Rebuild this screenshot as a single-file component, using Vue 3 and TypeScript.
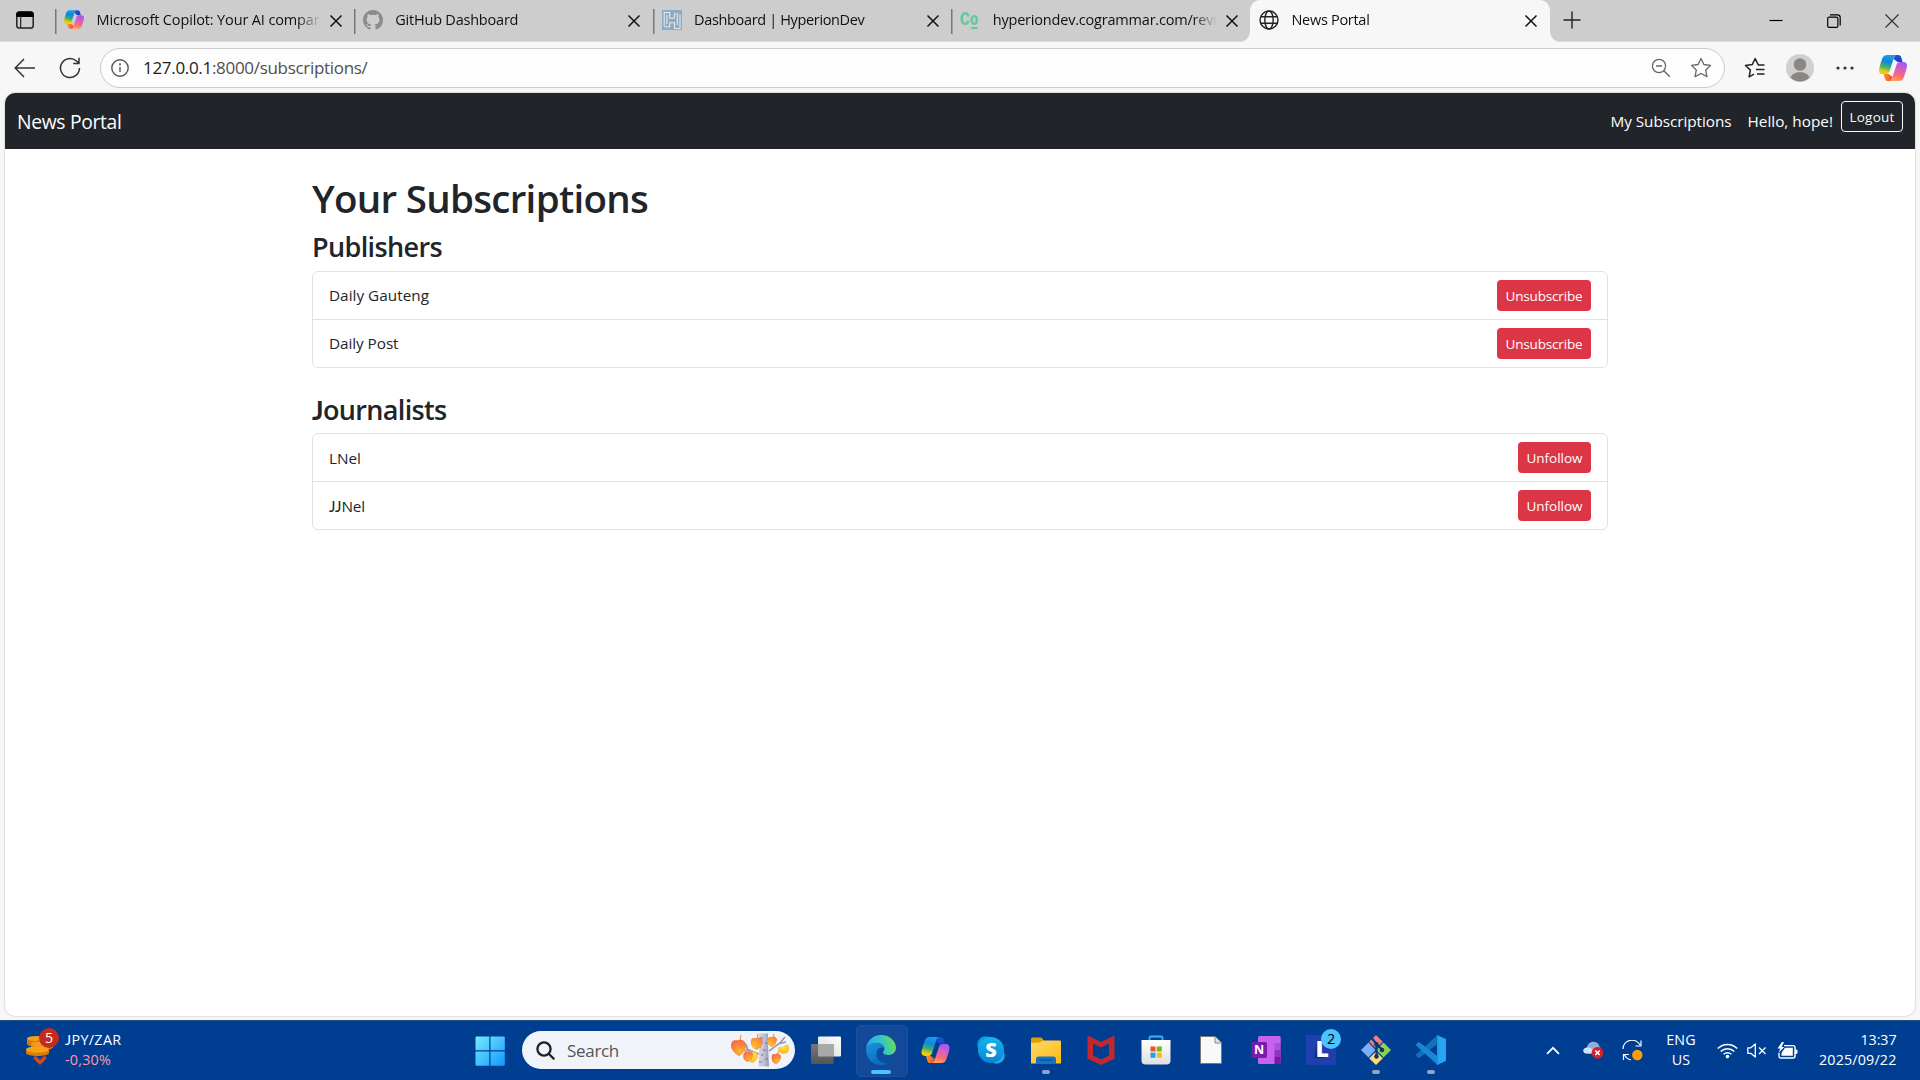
<script setup lang="ts">
import type { Directive } from 'vue'

interface Tab {
  title: string
  width: number
  icon: string
}

interface Row {
  name: string
  width: number
}

interface Section {
  title: string
  width: number
  action: string
  actionWidth: number
  rows: Row[]
}

// Tracks a label so that it occupies the given advance width.
const vFit: Directive<HTMLElement, number> = {
  mounted(el, binding) {
    const count = (el.textContent ?? '').length
    const natural = el.getBoundingClientRect().width
    if (count > 0) {
      el.style.letterSpacing = `${(binding.value - natural) / count}px`
    }
  },
}

// Leading J's are set in a face whose J rests on the baseline.
const leadJ = (text: string): string => /^J*/.exec(text)?.[0] ?? ''
const afterJ = (text: string): string => text.slice(leadJ(text).length)

const tabs: Tab[] = [
  { title: 'Microsoft Copilot: Your AI compan', width: 226, icon: 'copilot' },
  { title: 'GitHub Dashboard', width: 123, icon: 'github' },
  { title: 'Dashboard | HyperionDev', width: 170.5, icon: 'hyperion' },
  { title: 'hyperiondev.cogrammar.com/revi', width: 224, icon: 'co' },
]

const sections: Section[] = [
  {
    title: 'Publishers',
    width: 130,
    action: 'Unsubscribe',
    actionWidth: 77,
    rows: [
      { name: 'Daily Gauteng', width: 100 },
      { name: 'Daily Post', width: 69.5 },
    ],
  },
  {
    title: 'Journalists',
    width: 134.5,
    action: 'Unfollow',
    actionWidth: 56,
    rows: [
      { name: 'LNel', width: 32 },
      { name: 'JJNel', width: 36 },
    ],
  },
]
</script>

<template>
  <div class="screen">
    <svg class="defs" width="0" height="0" aria-hidden="true">
      <defs>
        <linearGradient id="cpL" x1="0.55" y1="0" x2="0.3" y2="1">
          <stop offset="0" stop-color="#1b9cf0" />
          <stop offset="0.35" stop-color="#1286d8" />
          <stop offset="0.62" stop-color="#3fae6b" />
          <stop offset="0.88" stop-color="#e6cf1c" />
          <stop offset="1" stop-color="#ffc400" />
        </linearGradient>
        <linearGradient id="cpR" x1="0.65" y1="0" x2="0.4" y2="1">
          <stop offset="0" stop-color="#a259f0" />
          <stop offset="0.4" stop-color="#d95fc0" />
          <stop offset="0.7" stop-color="#fb6a6f" />
          <stop offset="1" stop-color="#ffa35a" />
        </linearGradient>
        <linearGradient id="cpT" x1="0" y1="0" x2="1" y2="1">
          <stop offset="0" stop-color="#1a55d8" />
          <stop offset="1" stop-color="#1f3fc4" />
        </linearGradient>
        <linearGradient id="cpB" x1="0" y1="0" x2="1" y2="0">
          <stop offset="0" stop-color="#ff9a2e" />
          <stop offset="1" stop-color="#f0452c" />
        </linearGradient>
        <symbol id="copilot" viewBox="0 0 28 26">
          <path d="M16 0h3c2 0 2.800 1 3.300 2.600L23.600 7h-5l-4-3z" fill="url(#cpT)" />
          <path d="M12 26H9c-2 0-2.700-1-3.200-2.600L4.500 19h5l4 3z" fill="url(#cpB)" />
          <path d="M8.500 0H18c-1.600 0-2.600 1.200-3.100 2.800L10.600 16c-.7 2-1.800 3-3.800 3H3.500C.6 19-.5 16.800.2 13.800.9 10.400 2.300 6 3.400 3.200 4.300 1 5.800 0 8.500 0z" fill="url(#cpL)" />
          <path d="M19.500 26H10c1.600 0 2.600-1.200 3.100-2.800L17.400 10c.7-2 1.800-3 3.800-3h3.300c2.900 0 4 2.200 3.300 5.200-.7 3.400-2.100 7.800-3.200 10.600-.9 2.200-2.400 3.200-5.100 3.200z" fill="url(#cpR)" />
        </symbol>
        <symbol id="x" viewBox="0 0 14 14">
          <path d="M1.500 1.500l11 11M12.500 1.500l-11 11" fill="none" stroke="#111" stroke-width="1.500" />
        </symbol>
      </defs>
    </svg>

    <header class="tabstrip">
      <div class="actions">
        <svg width="18" height="18" viewBox="0 0 18 18">
          <rect x="0.800" y="1" width="16.400" height="16" rx="2.600" fill="none" stroke="#222" stroke-width="1.500" />
          <path d="M.8 5.500V3.200Q.8 1 3 1h12q2.200 0 2.200 2.200v2.300z" fill="#000" stroke="#000" />
          <path d="M4.700 5v12" stroke="#222" stroke-width="1.200" />
        </svg>
      </div>
      <div v-for="tab in tabs" :key="tab.title" class="tab">
        <svg v-if="tab.icon === 'copilot'" class="fav" width="20" height="19"><use href="#copilot" /></svg>
        <svg v-else-if="tab.icon === 'github'" class="fav" width="20" height="20" viewBox="0 0 16 16">
          <path fill="#8b8b8b" d="M8 0C3.580 0 0 3.580 0 8c0 3.540 2.290 6.530 5.470 7.590.4.070.55-.17.55-.38 0-.19-.01-.82-.01-1.490-2.010.37-2.530-.49-2.690-.94-.09-.23-.48-.94-.82-1.130-.28-.15-.68-.52-.01-.53.63-.01 1.080.58 1.230.82.72 1.210 1.870.87 2.330.66.070-.52.28-.87.51-1.070-1.780-.2-3.640-.89-3.640-3.950 0-.87.31-1.590.82-2.150-.08-.2-.36-1.020.08-2.120 0 0 .67-.21 2.200.82.64-.18 1.320-.27 2-.27s1.360.09 2 .27c1.530-1.040 2.200-.82 2.200-.82.44 1.100.16 1.920.08 2.120.51.56.82 1.270.82 2.150 0 3.070-1.870 3.750-3.650 3.950.29.25.54.73.54 1.480 0 1.070-.01 1.930-.01 2.200 0 .21.15.46.55.38A8.010 8.010 0 0 0 16 8c0-4.420-3.580-8-8-8z" />
        </svg>
        <svg v-else-if="tab.icon === 'hyperion'" class="fav" width="20" height="20" viewBox="0 0 20 20">
          <rect width="20" height="20" fill="#8eabc2" />
          <path d="M2.200 16V2.500h5.500v5.700h4.600V4h1.800M18 4.500V18.500h-5.500v-5.800H7.700v4H2.200M4.900 5v9M15.300 3v12" fill="none" stroke="#e2e9ee" stroke-width="1.100" />
        </svg>
        <span v-else class="fav co">Co<i></i></span>
        <div class="title"><span v-fit="tab.width">{{ tab.title }}</span></div>
        <svg class="close" width="14" height="14"><use href="#x" /></svg>
      </div>
      <div class="tab active">
        <svg class="fav" width="20" height="20" viewBox="0 0 20 20" fill="none" stroke="#222" stroke-width="1.400">
          <circle cx="10" cy="10" r="9" />
          <ellipse cx="10" cy="10" rx="4.200" ry="9" />
          <path d="M1.800 6.800h16.400M1.800 13.200h16.400" />
        </svg>
        <div class="title"><span v-fit="78">News Portal</span></div>
        <svg class="close" width="14" height="14"><use href="#x" /></svg>
      </div>
      <svg class="plus" width="18" height="18" viewBox="0 0 18 18"><path d="M9 0.500v17M.5 9h17" stroke="#222" stroke-width="1.400" /></svg>
      <div class="winctl">
        <svg width="14" height="14" viewBox="0 0 14 14"><path d="M.5 6.500h13" stroke="#000" stroke-width="1.200" /></svg>
        <svg width="14" height="14" viewBox="0 0 14 14" fill="none" stroke="#000" stroke-width="1.200">
          <rect x="0.700" y="3.200" width="10.200" height="10.200" rx="1.500" />
          <path d="M3 .8h7.500q2.700 0 2.700 2.700v8" />
        </svg>
        <svg width="14" height="14" viewBox="0 0 14 14"><path d="M.5.5l13 13M13.500.5l-13 13" stroke="#333" stroke-width="1.200" /></svg>
      </div>
    </header>

    <div class="toolbar">
      <svg class="back" width="22" height="20" viewBox="0 0 22 20" fill="none" stroke="#333" stroke-width="1.500">
        <path d="M21 10H1.500M10 1L1.200 10l8.800 9" />
      </svg>
      <svg class="reload" width="22" height="22" viewBox="0 0 22 22" fill="none" stroke="#333" stroke-width="1.500">
        <path d="M20.500 11a9.500 9.500 0 1 1-3.300-7.200L20 6.300M20 .8v5.700h-5.800" />
      </svg>
      <div class="address">
        <svg class="info" width="18" height="18" viewBox="0 0 18 18" fill="none" stroke="#555" stroke-width="1.400">
          <circle cx="9" cy="9" r="8.200" />
          <path d="M9 8v5" />
          <circle cx="9" cy="5.400" r="0.400" />
        </svg>
        <span v-fit="224.5" class="url">127.0.0.1<em>:8000/subscriptions/</em></span>
        <svg class="zoom" width="20" height="20" viewBox="0 0 20 20" fill="none" stroke="#666" stroke-width="1.300">
          <circle cx="8" cy="8" r="6.600" />
          <path d="M5 8h6M12.800 12.800l6 6" />
        </svg>
        <svg class="star" width="22" height="22" viewBox="0 0 22 22" fill="none" stroke="#666" stroke-width="1.300" stroke-linejoin="round">
          <path d="M11 1.500l2.900 6 6.600.9-4.800 4.600 1.200 6.600-5.900-3.100-5.900 3.100 1.200-6.600L1.500 8.400l6.600-.9z" />
        </svg>
      </div>
      <svg class="favs" width="22" height="22" viewBox="0 0 22 22" fill="none" stroke="#222" stroke-width="1.500" stroke-linejoin="round">
        <path d="M20.500 8h-6.200L11.200 1.500 8.200 7.600l-6.700.9 4.900 4.600-1.300 6.800 5-2.700M12 12.500h8.500M13 17h7.500" />
      </svg>
      <svg class="avatar" width="28" height="28" viewBox="0 0 28 28">
        <clipPath id="av"><circle cx="14" cy="14" r="13.500" /></clipPath>
        <circle cx="14" cy="14" r="14" fill="#d2d0ce" />
        <circle cx="14" cy="10.500" r="6.300" fill="#8a8886" />
        <ellipse cx="14" cy="26" rx="10" ry="8" fill="#8a8886" clip-path="url(#av)" />
      </svg>
      <svg class="dots" width="18" height="4" viewBox="0 0 18 4" fill="#333">
        <circle cx="2" cy="2" r="1.600" /><circle cx="9" cy="2" r="1.600" /><circle cx="16" cy="2" r="1.600" />
      </svg>
      <svg class="pilot" width="28" height="26"><use href="#copilot" /></svg>
    </div>

    <main class="page">
      <nav class="navbar">
        <span v-fit="104.5" class="brand">News Portal</span>
        <div class="navlinks">
          <a class="nl"><span v-fit="121">My Subscriptions</span></a>
          <a class="nl"><span v-fit="85.5">Hello, hope!</span></a>
          <button class="logout"><span v-fit="45">Logout</span></button>
        </div>
      </nav>
      <div class="container">
        <h1><span v-fit="336">Your Subscriptions</span></h1>
        <section v-for="s in sections" :key="s.title">
          <h3><span v-fit="s.width"><i class="j">{{ leadJ(s.title) }}</i>{{ afterJ(s.title) }}</span></h3>
          <ul>
            <li v-for="r in s.rows" :key="r.name">
              <span v-fit="r.width"><i class="j">{{ leadJ(r.name) }}</i>{{ afterJ(r.name) }}</span>
              <button class="danger"><span v-fit="s.actionWidth">{{ s.action }}</span></button>
            </li>
          </ul>
        </section>
      </div>
    </main>

    <footer class="taskbar">
      <div class="widget">
        <div class="coins">
          <svg width="28" height="30" viewBox="0 0 28 30">
            <path d="M1 4v5c0 1.500 4 2.500 9 2.500V3z" fill="#d97a0a" />
            <ellipse cx="10" cy="3.500" rx="9" ry="2.500" fill="#f5a019" />
            <path d="M5 9v4c2 2 6 2.500 12 2 5-.3 10-1 10-3V8z" fill="#e8850c" />
            <ellipse cx="15" cy="9" rx="10" ry="3" fill="#f39a16" />
            <path d="M0 14.500V18c0 4 23 4 23 0v-3.500z" fill="#d97a0a" />
            <ellipse cx="11.500" cy="14.500" rx="11.500" ry="3.200" fill="#f5a019" />
            <path d="M9.500 23l4.500 4.500 4.500-4.500" fill="none" stroke="#d8481b" stroke-width="3.600" stroke-linecap="round" />
          </svg>
          <b class="bdg">5</b>
        </div>
        <div class="quote">
          <span v-fit="56.5"><i class="j">J</i>PY/ZAR</span>
          <span v-fit="46" class="neg">-0,30%</span>
        </div>
      </div>

      <div class="center">
        <svg class="start" width="30" height="30" viewBox="0 0 30 30">
          <linearGradient id="win" x1="0" y1="0" x2="1" y2="1" gradientUnits="objectBoundingBox">
            <stop offset="0" stop-color="#74ecff" /><stop offset="1" stop-color="#1298fb" />
          </linearGradient>
          <path d="M1.500 0.500H14.300V14.300H.5V1.500q0-1 1-1zM15.500.5h13.300q1 0 1 1V14.300H15.500zM.5 15.500H14.300v14.300H1.500q-1 0-1-1zM15.500 15.500h14.300v13.300q0 1-1 1H15.500z" fill="url(#win)" />
        </svg>
        <div class="search">
          <svg class="mag" width="19" height="19" viewBox="0 0 19 19" fill="none" stroke="#222" stroke-width="2.300" stroke-linecap="round">
            <circle cx="8" cy="8" r="6.600" /><path d="M13 13l4.600 4.600" />
          </svg>
          <span v-fit="52">Search</span>
          <svg class="tree" width="60" height="34" viewBox="0 0 60 34">
            <defs>
              <radialGradient id="lf" cx="0.300" cy="0.700" r="0.800"><stop offset="0" stop-color="#ffc52e" /><stop offset="1" stop-color="#fb7b3a" /></radialGradient>
              <radialGradient id="lg" cx="0.600" cy="0.700" r="0.700"><stop offset="0" stop-color="#ffb62a" /><stop offset="1" stop-color="#fa6a48" /></radialGradient>
              <radialGradient id="ly" cx="0.500" cy="0.300" r="0.800"><stop offset="0" stop-color="#ffe04a" /><stop offset="1" stop-color="#f9b21c" /></radialGradient>
              <linearGradient id="tr"><stop offset="0" stop-color="#d7d7e6" /><stop offset="0.600" stop-color="#bcbcd2" /><stop offset="1" stop-color="#9696b2" /></linearGradient>
            </defs>
            <path d="M16 16l13 5M39 18l11-8 5-6M48 11l8-2M18 17l-2-6M14 18l5 0" fill="none" stroke="#9a9ab0" stroke-width="1.600" />
            <path d="M28.500 0.500h9.500v12l1 21H28.200l1-15z" fill="url(#tr)" />
            <path d="M30 5h3M35 10h3M29 14h2M33 17h3M31 22h2M35 26h3M29 29h3" stroke="#77778f" stroke-width="1.100" />
            <path d="M48 15c2-2 3 0 4-1 2-1 4-3 6-2 2 3 1 6-1 8-4 2-9 0-9-5z" fill="url(#ly)" />
            <path d="M21 20c3-2 6-1 7 2 0 4-3 7-6 8-4-2-4-7-1-10z" fill="url(#ly)" />
            <path d="M2 9c2-3 5-1 7-2 3-1 6 1 7 4 1 5-3 10-7 12C3 20-1 14 2 9z" fill="url(#lg)" />
            <path d="M21.500 6c2-2 4 0 5-1 3-1 5 0 6 2 1 4-2 8-6 10-5-2-7-7-5-11z" fill="url(#lf)" />
            <path d="M38 5c2-2 3 0 4-1 2-1 4 0 5 2 0 4-2 6-5 8-4-1-6-5-4-9z" fill="url(#lf)" />
            <path d="M14 20c2-2 3 0 4-1 2-1 4 0 5 2 0 4-2 7-5 8-4-1-6-5-4-9z" fill="url(#lg)" />
            <path d="M42 22c2-2 3 0 4-1 2-1 4 0 5 2 0 4-2 7-5 8-4-1-5-5-4-9z" fill="url(#lg)" />
            <path d="M10 7l1-5M27 5l1-4M43 4l1-3M18 19l2-3M47 21l2-3" stroke="#f08b2c" stroke-width="1" />
          </svg>
        </div>

        <div class="app">
          <svg width="30" height="28" viewBox="0 0 30 28">
            <linearGradient id="tv1" x1="0" y1="0" x2="0" y2="1"><stop offset="0" stop-color="#777" /><stop offset="1" stop-color="#555" /></linearGradient>
            <linearGradient id="tv2" x1="1" y1="0" x2="0" y2="1"><stop offset="0" stop-color="#fff" /><stop offset="1" stop-color="#d8d8d8" /></linearGradient>
            <rect x="7" y="0.500" width="23" height="20" rx="1" fill="url(#tv2)" />
            <rect x="0" y="8" width="22.500" height="20" rx="1" fill="url(#tv1)" />
            <path d="M7 8h15.500v12.500H8q-1 0-1-1z" fill="#a9a9a9" />
          </svg>
        </div>
        <div class="app on">
          <svg width="30" height="30" viewBox="0 0 30 30">
            <defs>
              <linearGradient id="e1" x1="0" y1="0.500" x2="1" y2="0.300"><stop offset="0" stop-color="#26a5e6" /><stop offset="0.500" stop-color="#2fc3cf" /><stop offset="1" stop-color="#6ae04e" /></linearGradient>
              <linearGradient id="e2" x1="0" y1="0" x2="0.500" y2="1"><stop offset="0" stop-color="#1b93dd" /><stop offset="1" stop-color="#0a6cc4" /></linearGradient>
            </defs>
            <path d="M0 14C.6 6 7 0 15 0c9 0 15 6.500 15 12.500 0 4.500-3 7.500-7.500 7.500-3.500 0-5.500-1.300-5.500-2.500s1.400-1.700 1.400-4C18.400 11 15.500 8 11 8 5 8 1 11 0 14z" fill="url(#e1)" />
            <path d="M0 14C1 10.500 5 8 10 8c5 0 8 2.500 8.400 5.200-1.500-1-4.400-1-6.400 1.300-3 3.500-1.500 10 3.500 12.500 1.800 1 4 1.400 5.500 1.500-1.800 1-4 1.500-6 1.500C6 30-.5 22.500 0 14z" fill="url(#e2)" />
            <path d="M12.500 14c-3.500 4-1.500 11.500 5 14 5 1.700 9-1.500 10.800-5-2.800 1.700-7 1.800-10 .1C14.500 21 13 17.500 14.500 13z" fill="#0c4f9c" />
          </svg>
          <i class="bar"></i>
        </div>
        <div class="app"><svg width="29" height="26"><use href="#copilot" /></svg></div>
        <div class="app">
          <svg width="28" height="28" viewBox="0 0 28 28">
            <linearGradient id="sk" x1="0" y1="0" x2="0" y2="1"><stop offset="0" stop-color="#13b5ec" /><stop offset="1" stop-color="#0a84d6" /></linearGradient>
            <circle cx="8.500" cy="8.500" r="8.300" fill="#079be6" /><circle cx="19.500" cy="19.500" r="8.300" fill="#2ba6ea" />
            <circle cx="14" cy="14" r="13" fill="url(#sk)" />
            <text x="14" y="20.800" text-anchor="middle" font-size="20" font-weight="800" fill="#fff" font-family="Open Sans, sans-serif">S</text>
          </svg>
        </div>
        <div class="app">
          <svg width="30" height="27" viewBox="0 0 30 27">
            <linearGradient id="fo" x1="0" y1="0" x2="1" y2="1"><stop offset="0" stop-color="#ffd868" /><stop offset="1" stop-color="#fdba12" /></linearGradient>
            <path d="M0 2Q0 .5 1.500.5h8q1 0 1.800 1L13 4v6H0z" fill="#e0a100" />
            <path d="M0 6l9-.5 3-2h17q1 0 1 1v22H0z" fill="url(#fo)" />
            <path d="M5 27v-5q0-2.500 2.500-2.500h15Q25 19.500 25 22v5z" fill="#1474c4" />
            <path d="M8.500 23h13" stroke="#0c4d8f" stroke-width="1.200" />
          </svg>
          <i class="dot"></i>
        </div>
        <div class="app">
          <svg width="28" height="30" viewBox="0 0 28 30">
            <path d="M.5.5L14 7 27.500.5v23.300L14 30 .5 23.800zM6 8.500v12l8 4 8-4v-12l-8 4z" fill="#c3282d" fill-rule="evenodd" />
          </svg>
        </div>
        <div class="app">
          <svg width="30" height="30" viewBox="0 0 30 30">
            <linearGradient id="st" x1="0" y1="0" x2="0" y2="1"><stop offset="0" stop-color="#fff" /><stop offset="1" stop-color="#dfdfe3" /></linearGradient>
            <path d="M8.500 6V2.800q0-1.300 1.300-1.300h10.400q1.300 0 1.300 1.300V6" fill="none" stroke="#33b9f2" stroke-width="1.800" />
            <path d="M.5 5h29v20.500q0 4-4 4h-21q-4 0-4-4z" fill="url(#st)" />
            <path d="M9.500 11.500h5v5h-5z" fill="#f1512b" /><path d="M15.700 11.500h5v5h-5z" fill="#7cb50a" />
            <path d="M9.500 17.700h5v5h-5z" fill="#15a3ec" /><path d="M15.700 17.700h5v5h-5z" fill="#fdb90a" />
          </svg>
        </div>
        <div class="app">
          <svg width="22" height="28" viewBox="0 0 22 28">
            <path d="M.5.5H15l6.500 6.500v20.500H.5z" fill="#f9f9f9" stroke="#777" />
            <path d="M15 .5V7h6.500" fill="#e2e2e2" stroke="#888" />
          </svg>
        </div>
        <div class="app">
          <svg width="30" height="28" viewBox="0 0 30 28">
            <rect x="7" y="0" width="22.500" height="28" rx="1.500" fill="#c961ee" />
            <path d="M23.500 0H28q1.500 0 1.500 1.500V7h-6z" fill="#c167ec" /><path d="M23.500 7h6v7h-6z" fill="#a84fdb" />
            <path d="M23.500 14h6v7h-6z" fill="#9232c4" /><path d="M23.500 21h6v5.500q0 1.500-1.500 1.500h-4.500z" fill="#7719aa" />
            <rect x="0.500" y="6" width="15.500" height="16" rx="1.500" fill="#7a1bae" />
            <text x="8" y="18.300" text-anchor="middle" font-size="12.500" font-weight="700" fill="#fff" font-family="Open Sans, sans-serif">N</text>
          </svg>
        </div>
        <div class="app">
          <svg width="30" height="30" viewBox="0 0 30 30">
            <rect width="30" height="30" fill="#1f3fae" />
            <path d="M11 6L8.500 23H19l-5-4z" fill="#132d52" />
            <text x="9.500" y="22" font-size="23" font-weight="800" fill="#fff" font-family="Open Sans, sans-serif">L</text>
          </svg>
          <b class="count">2</b>
        </div>
        <div class="app">
          <svg width="30" height="30" viewBox="0 0 30 30">
            <path d="M15 0l6.800 6.800L15 13.600 8.200 6.800z" fill="#f47c7c" /><path d="M7.500 7.500l7 7.500-7 7.500L0 15z" fill="#7faefa" />
            <path d="M22.500 7.500L30 15l-7.500 7.500-7-7.500z" fill="#8bd45c" /><path d="M15 16.400l6.800 6.800L15 30l-6.800-6.800z" fill="#fbdc72" />
            <path d="M11 3.500l4.500 5.500v13M15.500 9l6 6" fill="none" stroke="#083b7c" stroke-width="2.200" />
            <circle cx="15.500" cy="9.200" r="2.300" fill="#16325f" /><circle cx="21" cy="15" r="2.300" fill="#16325f" /><circle cx="15.500" cy="21.500" r="2.300" fill="#16325f" />
          </svg>
          <i class="dot"></i>
        </div>
        <div class="app">
          <svg width="30" height="30" viewBox="0 0 30 30">
            <path d="M21.500.3L30 4v22l-8.500 3.700z" fill="#27a5f0" />
            <path d="M22 0v8.500L3.800 22.500q-1 .7-1.900 0L.4 21q-.8-1 0-1.800L21 .6z" fill="#0e72bd" />
            <path d="M22 30v-8.500L3.800 7.500q-1-.7-1.900 0L.4 9q-.8 1 0 1.800L21 29.400z" fill="#1588d6" />
            <path d="M21 .6L22.500 0v30L21 29.400z" fill="#1f97e4" />
          </svg>
          <i class="dot"></i>
        </div>
      </div>

      <div class="tray">
        <svg class="chev" width="14" height="9" viewBox="0 0 14 9"><path d="M1 7.800l6-6 6 6" fill="none" stroke="#fff" stroke-width="1.700" /></svg>
        <svg class="cloud" width="21" height="18" viewBox="0 0 21 18">
          <path d="M4 6.500C5 2 8 .5 11 .7c3 .2 5 2 5.500 5C19 7 18 12.500 14 12.500H4C-1 12.500-.8 7 4 6.500z" fill="#8fb0dc" />
          <path d="M4 6.500c3-.5 5 1 9 6H4c-5 0-4.800-5.500 0-6z" fill="#d5e2f4" />
          <circle cx="14.500" cy="11.800" r="5.900" fill="#d3212c" />
          <path d="M12.300 9.600l4.400 4.400M16.700 9.600l-4.400 4.400" stroke="#fff" stroke-width="1.500" />
        </svg>
        <svg class="sync" width="21" height="21" viewBox="0 0 21 21" fill="none" stroke="#fff" stroke-width="1.200">
          <path d="M1 9A9 9 0 0 1 18 5M19 .5V6h-5.500M9 20A9 9 0 0 1 2.500 14.500M1.500 20v-5.500H7" />
          <circle cx="15.300" cy="15" r="5.200" fill="#ff9b0a" stroke="none" />
        </svg>
        <div class="lang"><span v-fit="29.5">ENG</span><span v-fit="18.5">US</span></div>
        <svg class="wifi" width="21" height="17" viewBox="0 0 21 17" fill="none" stroke="#fff" stroke-width="1.500">
          <path d="M.8 6.500a13.700 13.700 0 0 1 19.400 0M3.700 9.500a9.600 9.600 0 0 1 13.600 0M6.600 12.300a5.500 5.500 0 0 1 7.800 0" />
          <circle cx="10.500" cy="14.600" r="1.800" fill="#fff" stroke="none" />
        </svg>
        <svg class="vol" width="20" height="15" viewBox="0 0 20 15" fill="none" stroke="#fff" stroke-width="1.300" stroke-linejoin="round">
          <path d="M.8 4.800h3L8.300 1v13L3.800 10.300h-3zM12 4.500l6.500 6.500M18.500 4.500L12 11" />
        </svg>
        <svg class="bat" width="21" height="17" viewBox="0 0 21 17">
          <path d="M7 3.600h9q2 0 2 2V14q0 2-2 2H4q-2 0-2-2v-3" fill="none" stroke="#fff" stroke-width="1.400" />
          <path d="M8 5.800h7.800v8H4.500V11z" fill="#fff" /><path d="M18 7.500h1.500l1 1v2.500l-1 1H18z" fill="#fff" />
          <path d="M5 0L.5 6.500h2.800L1.500 11l5.700-6H4.500L7 0z" fill="#fff" />
        </svg>
        <div class="clock"><span v-fit="36">13:37</span><span v-fit="77.5">2025/09/22</span></div>
      </div>
    </footer>
  </div>
</template>

<style>
body {
  margin: 0;
  overflow: hidden;
}
</style>

<style scoped>
.screen {
  width: 1920px;
  height: 1080px;
  display: flex;
  flex-direction: column;
  overflow: hidden;
  background: #f7f7f7;
  font-family: 'Open Sans', 'Noto Sans', sans-serif;
  color: #212529;
}
.screen * {
  box-sizing: border-box;
}
.defs {
  position: absolute;
}
svg {
  display: block;
  flex: none;
}
span {
  display: inline-block;
  white-space: nowrap;
}
button {
  font: inherit;
  padding: 0;
}
.j {
  font-family: Lato, sans-serif;
  font-style: normal;
}

/* Tab strip */
.tabstrip {
  display: flex;
  height: 42px;
  flex: none;
  background: #cdcdcd;
  border-bottom: 1px solid #dedede;
}
.actions {
  width: 55px;
  padding: 11px 0 0 16px;
}
.tab {
  width: 298.750px;
  height: 42px;
  display: flex;
  align-items: flex-start;
  flex: none;
  font-size: 14.500px;
  color: #111;
  background: linear-gradient(#777, #777) 0 9px / 1.500px 25px no-repeat;
}
.fav {
  margin: 10px 0 0 9px;
  width: 20px;
}
.co {
  position: relative;
  height: 20px;
  color: #62c9a0;
  font: 900 18px/18px 'Roboto', sans-serif;
  transform: scaleX(0.84);
  transform-origin: 0 0;
}
.co i {
  position: absolute;
  left: 13px;
  bottom: 1px;
  width: 8px;
  height: 2px;
  background: #62c9a0;
}
.title {
  margin: 9px 0 0 12.500px;
  width: 230px;
  height: 22px;
  line-height: 21px;
  overflow: hidden;
  white-space: nowrap;
  mask-image: linear-gradient(90deg, #000 200px, transparent 224px);
}
.close {
  margin: 14px 0 0 2px;
}
.active {
  position: relative;
  width: 300px;
  background: #f7f7f7;
  border-radius: 10px 10px 0 0;
}
.active .close {
  margin-left: 2.500px;
}
.active::before,
.active::after {
  content: '';
  position: absolute;
  bottom: 0;
  width: 10px;
  height: 10px;
}
.active::before {
  left: -10px;
  background: radial-gradient(circle at 0 0, #cdcdcd 9.500px, #f7f7f7 10px);
}
.active::after {
  right: -10px;
  background: radial-gradient(circle at 100% 0, #cdcdcd 9.500px, #f7f7f7 10px);
}
.plus {
  margin: 11px 0 0 13px;
}
.winctl {
  display: flex;
  gap: 44px;
  margin: 14px 21.500px 0 auto;
}

/* Toolbar */
.toolbar {
  display: flex;
  align-items: center;
  height: 51px;
  flex: none;
}
.back {
  margin-left: 14px;
}
.reload {
  margin-left: 23px;
}
.address {
  display: flex;
  align-items: center;
  width: 1625px;
  height: 40px;
  margin-left: 19px;
  padding: 0 12px 0 10px;
  border: 1px solid #cbcbcb;
  border-radius: 20px;
  background: #fdfdfd;
}
.url {
  margin-left: 14px;
  font-size: 17px;
  line-height: 24px;
  color: #222;
}
.url em {
  font-style: normal;
  color: #505050;
}
.zoom {
  margin-left: auto;
}
.star {
  margin-left: 19px;
}
.favs {
  margin-left: 19px;
}
.avatar {
  margin-left: 20px;
}
.dots {
  margin-left: 22px;
}
.pilot {
  margin-left: 25px;
}

/* Page */
.page {
  width: 1910px;
  height: 923px;
  margin: 0 5px;
  flex: none;
  border-radius: 10px;
  background: #fff;
  overflow: hidden;
  box-shadow: 0 0 2px rgba(0, 0, 0, 0.3);
}
.navbar {
  height: 56px;
  padding: 8px 12px;
  display: flex;
  justify-content: space-between;
  background: #212529;
  color: #fff;
}
.brand {
  font-size: 19.300px;
  line-height: 42px;
}
.navlinks {
  display: flex;
  align-items: flex-start;
}
.nl {
  padding: 0 8px;
  font-size: 15.300px;
  line-height: 40px;
}
.logout {
  width: 62px;
  height: 31px;
  border: 1px solid #f8f9fa;
  border-radius: 4px;
  background: transparent;
  color: #f8f9fa;
  font-size: 13.500px;
  line-height: 28px;
}
.container {
  width: 1320px;
  margin: 24px auto 0;
  padding: 0 12px;
}
h1 {
  height: 48px;
  margin: 0 0 8px;
  font-size: 38.500px;
  font-weight: 600;
  line-height: 50px;
}
h3 {
  height: 33.600px;
  margin: 0 0 8px;
  font-size: 27px;
  font-weight: 600;
  line-height: 35.600px;
}
h3 .j {
  font-weight: 700;
}
h1 span,
h3 span {
  vertical-align: top;
}
ul {
  list-style: none;
  margin: 0 0 24px;
  padding: 0;
  border: 1px solid #dee2e6;
  border-radius: 6px;
}
li {
  display: flex;
  align-items: center;
  justify-content: space-between;
  height: 47px;
  padding: 0 16px;
  font-size: 15.300px;
}
li + li {
  height: 48px;
  border-top: 1px solid #dee2e6;
}
.danger {
  height: 31px;
  padding: 0 8.500px;
  border: 0;
  border-radius: 4px;
  background: #dc3545;
  color: #fff;
  font-size: 13.500px;
  line-height: 31px;
}
.danger span {
  padding-top: 1px;
  line-height: 30px;
  vertical-align: top;
}

/* Taskbar */
.taskbar {
  display: flex;
  align-items: flex-start;
  height: 60px;
  margin-top: 4px;
  flex: none;
  background: #003e92;
  border-top: 1px solid #234f83;
  color: #fff;
  font-size: 14.300px;
  line-height: 20px;
}
.widget {
  display: flex;
  width: 474.500px;
  padding-left: 26px;
}
.coins {
  position: relative;
  width: 28px;
  padding-top: 14px;
}
.bdg,
.count {
  position: absolute;
  width: 20px;
  height: 20px;
  border-radius: 50%;
  text-align: center;
  font-weight: 400;
  line-height: 20px;
}
.bdg {
  left: 13px;
  top: 7px;
  background: #c42b1c;
}
.count {
  left: 28px;
  top: 8px;
  background: #4cc2ff;
  color: #000;
}
.quote {
  display: flex;
  flex-direction: column;
  align-items: flex-start;
  margin: 8.500px 0 0 11px;
}
.neg {
  color: #ff99a4;
}
.center {
  display: flex;
  width: 1071.500px;
}
.start {
  margin-top: 15px;
}
.search {
  display: flex;
  align-items: center;
  width: 273px;
  height: 38px;
  margin: 10px 3px 0 17.500px;
  padding: 0 5px 0 14px;
  border-radius: 19px;
  background: #f0f4fa;
  color: #555;
  font-size: 17px;
}
.search span {
  margin-left: 12px;
  padding-top: 2px;
}
.tree {
  margin-left: auto;
}
.app {
  position: relative;
  display: flex;
  align-items: center;
  justify-content: center;
  width: 55px;
  height: 58px;
}
.app > svg {
  position: relative;
  overflow: visible;
}
.on::before {
  content: '';
  position: absolute;
  left: 2.500px;
  top: 4px;
  width: 50px;
  height: 50px;
  border-radius: 5px;
  background: #14499a;
  border: 1px solid #1e509c;
}
.bar,
.dot {
  position: absolute;
  top: 49px;
  height: 4px;
  border-radius: 2px;
}
.bar {
  width: 20px;
  background: #4cc2ff;
}
.dot {
  width: 8px;
  background: #8da5cd;
}
.tray {
  display: flex;
  width: 374px;
  height: 58px;
  align-items: center;
}
.cloud {
  margin-left: 22.500px;
}
.sync {
  margin-left: 18.500px;
}
.lang {
  display: flex;
  flex-direction: column;
  align-items: center;
  width: 30px;
  margin-left: 23px;
}
.wifi {
  margin-left: 21px;
}
.vol {
  margin-left: 9px;
}
.bat {
  margin-left: 10px;
}
.clock {
  display: flex;
  flex-direction: column;
  align-items: flex-end;
  margin: 0 23.500px 0 auto;
}
</style>
